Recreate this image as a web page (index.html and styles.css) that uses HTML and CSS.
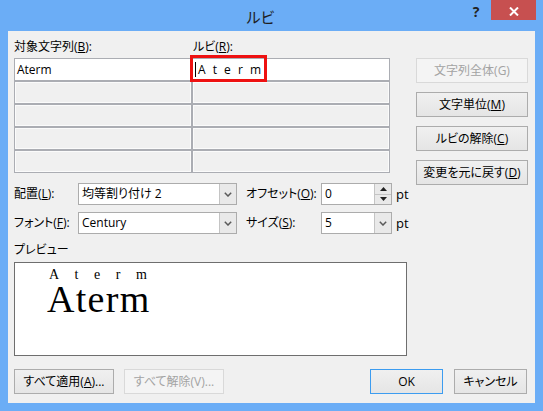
FILE: index.html
```html
<!DOCTYPE html>
<html lang="ja">
<head>
<meta charset="utf-8">
<title>ルビ</title>
<link rel="stylesheet" href="styles.css">
</head>
<body>
<div class="window">
  <div class="titlebar">
    <div class="title">ルビ</div>
    <div class="help">?</div>
    <div class="close">
      <svg width="10" height="9" viewBox="0 0 10 9"><path d="M1 0.5 L9 8.5 M9 0.5 L1 8.5" stroke="#fff" stroke-width="2" fill="none"/></svg>
    </div>
  </div>
  <div class="client">
    <div class="top">
      <div class="main">
        <div class="labels">
          <span>対象文字列(<u>B</u>):</span>
          <span>ルビ(<u>R</u>):</span>
        </div>
        <div class="grid">
          <div class="cell edit">Aterm</div>
          <div class="cell edit ruby"><span class="caret"></span><span class="rubytext">A t e r m</span><span class="highlight"></span></div>
          <div class="cell"></div><div class="cell"></div>
          <div class="cell"></div><div class="cell"></div>
          <div class="cell"></div><div class="cell"></div>
          <div class="cell"></div><div class="cell"></div>
        </div>
        <div class="form-row first">
          <span class="lbl-a">配置(<u>L</u>):</span>
          <div class="combo wide"><span class="val">均等割り付け 2</span><span class="arrow"><svg width="8" height="5" viewBox="0 0 8 5"><path d="M0.8 0.8 L4 4 L7.2 0.8" stroke="#5a5a5a" stroke-width="1.5" fill="none"/></svg></span></div>
          <span class="lbl-b">オフセット(<u>O</u>):</span>
          <div class="combo small"><span class="val">0</span><span class="spin"><span class="half"><svg width="7" height="4" viewBox="0 0 7 4"><path d="M3.5 0 L7 4 L0 4 Z" fill="#222"/></svg></span><span class="half"><svg width="7" height="4" viewBox="0 0 7 4"><path d="M0 0 L7 0 L3.5 4 Z" fill="#222"/></svg></span></span></div>
          <span class="unit">pt</span>
        </div>
        <div class="form-row">
          <span class="lbl-a">フォント(<u>F</u>):</span>
          <div class="combo wide"><span class="val">Century</span><span class="arrow"><svg width="8" height="5" viewBox="0 0 8 5"><path d="M0.8 0.8 L4 4 L7.2 0.8" stroke="#5a5a5a" stroke-width="1.5" fill="none"/></svg></span></div>
          <span class="lbl-b">サイズ(<u>S</u>):</span>
          <div class="combo small"><span class="val">5</span><span class="arrow"><svg width="8" height="5" viewBox="0 0 8 5"><path d="M0.8 0.8 L4 4 L7.2 0.8" stroke="#5a5a5a" stroke-width="1.5" fill="none"/></svg></span></div>
          <span class="unit">pt</span>
        </div>
        <div class="preview-label">プレビュー</div>
        <div class="preview">
          <div class="p-ruby">Aterm</div>
          <div class="p-base">Aterm</div>
        </div>
      </div>
      <div class="side">
        <div class="btn disabled">文字列全体(G)</div>
        <div class="btn">文字単位(<u>M</u>)</div>
        <div class="btn">ルビの解除(<u>C</u>)</div>
        <div class="btn">変更を元に戻す(<u>D</u>)</div>
      </div>
    </div>
    <div class="bottom">
      <div class="btn wide-btn">すべて適用(<u>A</u>)...</div>
      <div class="btn wide-btn disabled">すべて解除(V)...</div>
      <div class="spacer"></div>
      <div class="btn dlg default">OK</div>
      <div class="btn dlg">キャンセル</div>
    </div>
  </div>
</div>
</body>
</html>
```
FILE: styles.css
```css
* { box-sizing: border-box; }
html, body { margin: 0; padding: 0; }
body {
  width: 543px;
  height: 411px;
  overflow: hidden;
  font-family: "Open Sans", "Noto Sans CJK JP", sans-serif;
  font-size: 12px;
  color: #000;
  font-feature-settings: "palt";
  white-space: nowrap;
}
u { text-decoration: underline; text-underline-offset: 1px; }

.window {
  width: 543px;
  height: 411px;
  background: #6badf6;
  display: flex;
  flex-direction: column;
}
.titlebar {
  height: 31px;
  flex: none;
  display: flex;
  align-items: flex-start;
}
.title {
  flex: 1;
  padding-left: 60px;
  text-align: center;
  font-family: "Noto Sans CJK JP", sans-serif;
  font-size: 15px;
  line-height: 33px;
  color: #1e1e1e;
}
.help {
  width: 30px;
  text-align: center;
  font-family: "Open Sans", sans-serif;
  font-weight: bold;
  font-size: 14px;
  line-height: 23px;
  color: #222;
}
.close {
  width: 45px;
  height: 20px;
  margin-right: 7px;
  background: #c75050;
  display: flex;
  align-items: center;
  justify-content: center;
  padding-top: 3px;
}
.client {
  margin: 0 8px;
  height: 372px;
  background: #f0f0f0;
  padding-left: 6px;
  display: flex;
  flex-direction: column;
}
.top { display: flex; }
.main { width: 402px; flex: none; }

.labels {
  display: grid;
  grid-template-columns: 179px 1fr;
  height: 27px;
  padding-top: 7px;
  line-height: 17px;
}

.grid {
  width: 376px;
  display: grid;
  grid-template-columns: 176px 1fr;
  grid-auto-rows: 21px;
  gap: 2px;
  padding: 1px;
  background: #abadb3;
}
.cell {
  background: #f0f0f0;
  border: 1px solid #fbfbfb;
  position: relative;
}
.cell.edit {
  background: #fff;
  border: none;
  padding-left: 2px;
  line-height: 21px;
  display: flex;
  align-items: center;
}
.caret {
  width: 1px;
  height: 15px;
  background: #000;
  margin-right: 2px;
}
.rubytext { letter-spacing: 2px; }
.highlight {
  position: absolute;
  left: -3px;
  top: -4px;
  width: 77px;
  height: 27px;
  border: 3px solid #ee1111;
}

.side {
  width: 112px;
  padding-top: 27px;
  display: flex;
  flex-direction: column;
  gap: 9px;
}
.btn {
  height: 25px;
  border: 1px solid #acacac;
  background: linear-gradient(#f0f0f0, #e5e5e5);
  display: flex;
  align-items: center;
  justify-content: center;
  line-height: 16px;
}
.btn.disabled {
  color: #a3a3a3;
  border-color: #d9d9d9;
  background: #f4f4f4;
}
.btn.default { border-color: #3c9cf0; }

.form-row {
  display: flex;
  align-items: center;
  height: 22px;
  margin-top: 7px;
  line-height: 16px;
}
.form-row.first { margin-top: 10px; }
.lbl-a { width: 64px; flex: none; }
.lbl-b { width: 75px; margin-left: 9px; flex: none; }
.combo {
  height: 22px;
  border: 1px solid #acacac;
  background: #fff;
  display: flex;
  flex: none;
}
.combo.wide { width: 159px; }
.combo.small { width: 71px; }
.combo .val {
  flex: 1;
  padding-left: 3px;
  line-height: 20px;
}
.combo .arrow {
  width: 17px;
  border-left: 1px solid #c4c4c4;
  background: #e9e9e9;
  display: flex;
  align-items: center;
  justify-content: center;
}
.spin {
  width: 17px;
  display: flex;
  flex-direction: column;
  border-left: 1px solid #c4c4c4;
}
.spin .half {
  flex: 1;
  background: #e9e9e9;
  display: flex;
  align-items: center;
  justify-content: center;
}
.spin .half + .half { border-top: 1px solid #c4c4c4; }
.unit { margin-left: 4px; font-size: 13px; }

.preview-label {
  margin-top: 8px;
  height: 16px;
  line-height: 16px;
}
.preview {
  margin-top: 4px;
  width: 393px;
  height: 94px;
  border: 1px solid #6e6e6e;
  background: #fff;
  font-family: "Liberation Serif", serif;
  font-feature-settings: normal;
}
.p-ruby {
  padding-top: 4px;
  padding-left: 34px;
  font-size: 14px;
  line-height: 16px;
  letter-spacing: 15.5px;
}
.p-base {
  padding-left: 32px;
  font-size: 38px;
  line-height: 32px;
  letter-spacing: 1.3px;
}

.bottom {
  display: flex;
  margin-top: 13px;
  padding-right: 8px;
}
.wide-btn { width: 100px; margin-right: 10px; }
.spacer { flex: 1; }
.dlg { width: 73px; margin-left: 11px; }
```
